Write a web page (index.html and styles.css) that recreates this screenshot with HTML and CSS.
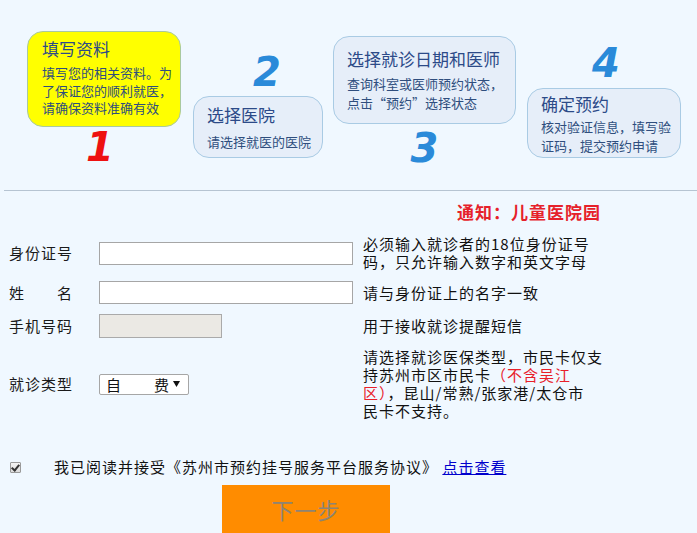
FILE: index.html
```html
<!DOCTYPE html>
<html lang="zh-CN">
<head>
<meta charset="utf-8">
<title>预约挂号 - 填写资料</title>
<link rel="stylesheet" href="styles.css">
</head>
<body>
<div class="steps">
  <div class="step step-1">
    <div class="step-box box-active">
      <div class="step-title">填写资料</div>
      <div class="step-desc">填写您的相关资料。为了保证您的顺利就医，请确保资料准确有效</div>
    </div>
    <div class="step-num num-red">1</div>
  </div>
  <div class="step step-2">
    <div class="step-num">2</div>
    <div class="step-box">
      <div class="step-title">选择医院</div>
      <div class="step-desc">请选择就医的医院</div>
    </div>
  </div>
  <div class="step step-3">
    <div class="step-box">
      <div class="step-title">选择就诊日期和医师</div>
      <div class="step-desc">查询科室或医师预约状态，点击“预约”选择状态</div>
    </div>
    <div class="step-num">3</div>
  </div>
  <div class="step step-4">
    <div class="step-num">4</div>
    <div class="step-box">
      <div class="step-title">确定预约</div>
      <div class="step-desc">核对验证信息，填写验证码，提交预约申请</div>
    </div>
  </div>
</div>
<div class="divider"></div>

<div class="notice">通知：儿童医院园</div>

<form class="form">
  <label class="label" for="idno">身份证号</label>
  <div class="field"><input class="text-input" id="idno" type="text"></div>
  <div class="hint">必须输入就诊者的18位身份证号码，只允许输入数字和英文字母</div>

  <label class="label" for="name">姓　　名</label>
  <div class="field"><input class="text-input" id="name" type="text"></div>
  <div class="hint">请与身份证上的名字一致</div>

  <label class="label" for="phone">手机号码</label>
  <div class="field"><input class="text-input phone-input" id="phone" type="text" disabled></div>
  <div class="hint">用于接收就诊提醒短信</div>

  <label class="label" for="type">就诊类型</label>
  <div class="field">
    <select class="select" id="type">
      <option>自　　费</option>
      <option>市民卡</option>
    </select>
  </div>
  <div class="hint">请选择就诊医保类型，市民卡仅支持苏州市区市民卡<span class="hint-red">（不含吴江<br>区）</span>，昆山/常熟/张家港/太仓市<br>民卡不支持。</div>
</form>

<div class="agree">
  <input class="agree-check" type="checkbox" checked>
  <span class="agree-text">我已阅读并接受《苏州市预约挂号服务平台服务协议》 <a class="agree-link" href="#">点击查看</a></span>
</div>

<div class="actions">
  <button class="next-btn" type="button">下一步</button>
</div>
</body>
</html>
```

FILE: styles.css
```css
html {
  overflow: hidden;
}
body {
  margin: 0;
  background: #f0f8ff;
  font-family: "Noto Sans CJK SC", "Noto Sans", sans-serif;
  color: #111;
}

/* ---------- steps ---------- */
.steps {
  display: flex;
  align-items: flex-start;
  height: 190px;
  padding-left: 27px;
}
.step {
  display: flex;
  flex-direction: column;
  flex: none;
}
.step-1 { width: 154px; }
.step-2 { width: 130px; margin-left: 12px; }
.step-3 { width: 183px; margin-left: 10px; }
.step-4 { width: 154px; margin-left: 11px; }

.step-box {
  box-sizing: border-box;
  border: 1px solid #a9cbe4;
  border-radius: 16px;
  background: #e6eef9;
  padding-left: 13px;
  color: #2f4f80;
}
.box-active {
  background: #ffff00;
  border-color: #a9c9a0;
}
.step-title {
  font-size: 17px;
  line-height: 22px;
  color: #2c4a88;
}
.step-desc {
  font-size: 13px;
  line-height: 19px;
  color: #2f4e7e;
}

.step-1 .step-box { margin-top: 31px; height: 96px; padding-top: 6px; padding-left: 14px; }
.step-1 .step-desc { margin-top: 4px; line-height: 17.5px; }
.step-2 .step-box { margin-top: 4px; height: 62px; padding-top: 7px; }
.step-2 .step-desc { margin-top: 6px; }
.step-3 .step-box { margin-top: 36px; height: 88px; padding-top: 11px; }
.step-3 .step-desc { margin-top: 4px; }
.step-4 .step-box { margin-top: 5px; height: 70px; padding-top: 4px; }
.step-4 .step-desc { margin-top: 2px; }

.step-num {
  font-family: "DejaVu Sans", sans-serif;
  font-weight: bold;
  font-style: italic;
  font-size: 40px;
  line-height: 40px;
  text-align: center;
  color: #2a8ad9;
}
.num-red { color: #ee1111; }
.step-2 .step-num { margin-top: 52px; padding-left: 18px; }
.step-3 .step-num { margin-top: 4px; }
.step-4 .step-num { margin-top: 43px; padding-left: 4px; }
.step-1 .step-num { margin-right: 8px; }

.divider {
  margin-left: 4px;
  border-top: 1px solid #b6c4d2;
}

/* ---------- notice ---------- */
.notice {
  margin-top: 10px;
  padding-left: 457px;
  font-size: 17px;
  line-height: 22px;
  font-weight: bold;
  letter-spacing: 1px;
  color: #e6212a;
}

/* ---------- form ---------- */
.form {
  display: grid;
  grid-template-columns: 90px 264px 240px;
  row-gap: 10px;
  align-items: center;
  margin-top: 12px;
  padding-left: 9px;
}
.label {
  font-size: 15px;
  line-height: 18px;
  letter-spacing: 1px;
  color: #1a1a1a;
}
.field {
  display: flex;
}
.text-input {
  box-sizing: border-box;
  width: 254px;
  height: 23px;
  margin: 0;
  border: 1px solid #a6a6a6;
  background: #fff;
  padding: 0 4px;
}
.phone-input {
  width: 123px;
  height: 24px;
  background: #ebe9e4;
  border-color: #aaa;
}
.select {
  box-sizing: border-box;
  width: 90px;
  height: 21px;
  margin: 0;
  border: 1px solid #a6a6a6;
  border-radius: 2px;
  padding: 0 0 0 6px;
  background: #fff url("data:image/svg+xml,%3Csvg xmlns='http://www.w3.org/2000/svg' width='7' height='6'%3E%3Cpath d='M0 0h7L3.5 6z' fill='%23111'/%3E%3C/svg%3E") no-repeat right 8px center;
  -webkit-appearance: none;
  appearance: none;
  font-family: inherit;
  font-size: 15px;
  letter-spacing: 1px;
  color: #111;
  line-height: 19px;
}
.hint {
  font-size: 15px;
  line-height: 18px;
  letter-spacing: 1px;
  color: #111;
}
.hint-red {
  color: #e8202a;
}

/* ---------- agreement ---------- */
.agree {
  display: flex;
  align-items: center;
  margin-top: 37px;
  height: 20px;
}
.agree-check {
  -webkit-appearance: none;
  appearance: none;
  box-sizing: border-box;
  position: relative;
  width: 11px;
  height: 11px;
  margin: 0 0 0 10px;
  border: 1px solid #9a9a9a;
  border-radius: 1px;
  background: linear-gradient(#f4f4f4, #dcdcdc);
}
.agree-check:checked::after {
  content: "";
  position: absolute;
  left: 2px;
  top: 0px;
  width: 3px;
  height: 6px;
  border: solid #333;
  border-width: 0 2px 2px 0;
  transform: rotate(40deg);
}
.agree-text {
  margin-left: 33px;
  font-size: 15px;
  line-height: 20px;
  letter-spacing: 1px;
  color: #111;
}
.agree-link {
  color: #0000cc;
  text-decoration: underline;
}

/* ---------- button ---------- */
.actions {
  margin-top: 8px;
  padding-left: 222px;
}
.next-btn {
  display: block;
  width: 168px;
  height: 48px;
  border: none;
  background: #ff8c00;
  color: #8d8474;
  font-family: inherit;
  font-size: 22px;
  letter-spacing: 1px;
  padding: 0;
}
```
